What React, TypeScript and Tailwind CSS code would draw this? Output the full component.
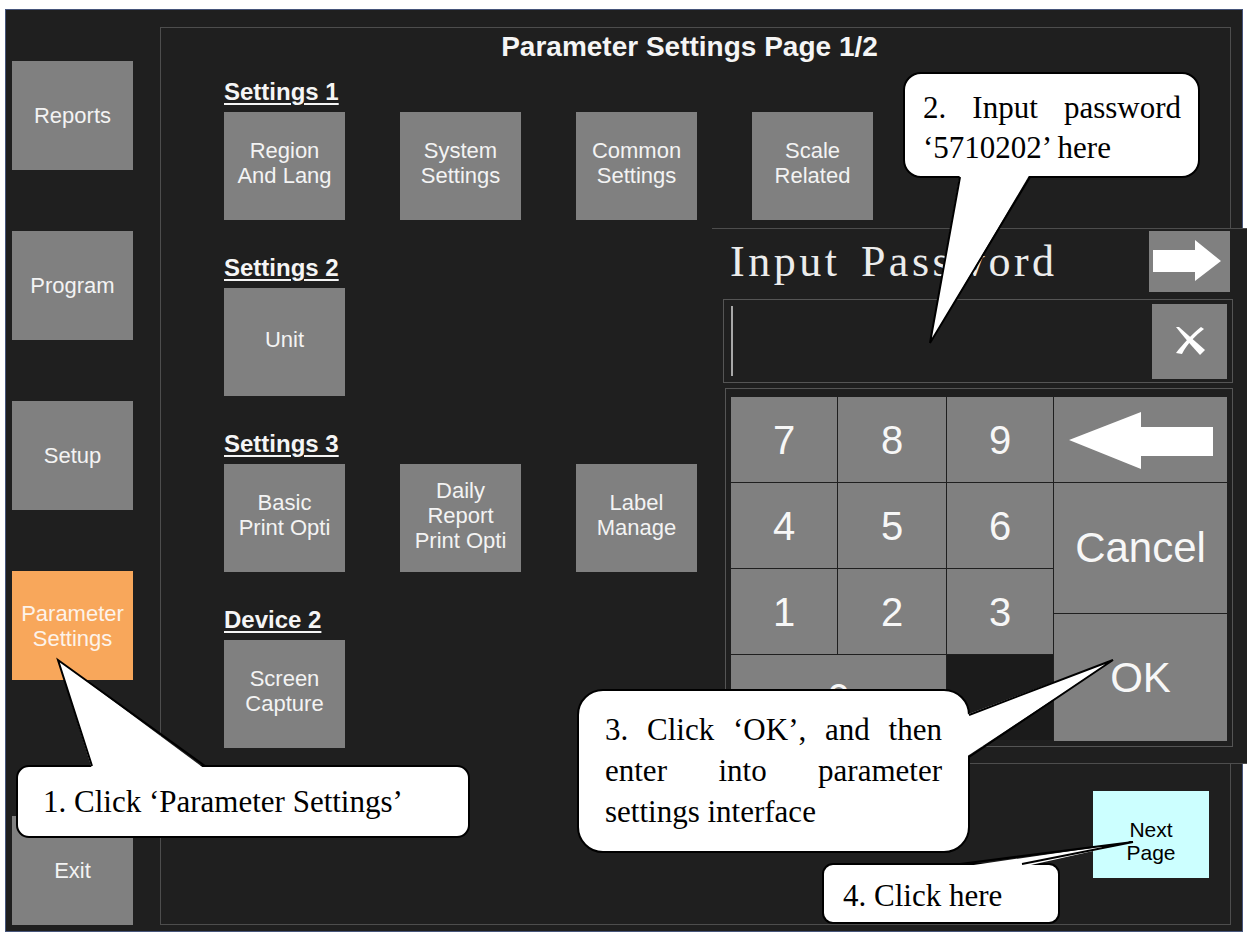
import React from "react";

const sections = [
  { title: "Settings 1", items: [["Region", "And Lang"], ["System", "Settings"], ["Common", "Settings"], ["Scale", "Related"]] },
  { title: "Settings 2", items: [["Unit"]] },
  { title: "Settings 3", items: [["Basic", "Print Opti"], ["Daily", "Report", "Print Opti"], ["Label", "Manage"]] },
  { title: "Device 2", items: [["Screen", "Capture"]] },
];

const SideButton = ({ label, active }: { label: string[]; active?: boolean }) => (
  <div
    className={`w-[121px] h-[109px] shrink-0 flex flex-col items-center justify-center text-center text-[22px] leading-[25px] ${
      active ? "bg-[#f8a75b] text-[#fdf3ea]" : "bg-[#808080] text-[#f3f3f3]"
    }`}
  >
    {label.map((l) => (
      <span key={l}>{l}</span>
    ))}
  </div>
);

const Tile = ({ label }: { label: string[] }) => (
  <div className="w-[121px] h-[108px] shrink-0 bg-[#808080] text-[#f3f3f3] flex flex-col items-center justify-center pb-[6px] text-center text-[22px] leading-[25px]">
    {label.map((l) => (
      <span key={l}>{l}</span>
    ))}
  </div>
);

const Key = ({ children, className = "" }: { children?: React.ReactNode; className?: string }) => (
  <div className={`bg-[#808080] text-[#f7f7f7] flex items-center justify-center text-[40px] leading-none ${className}`}>
    {children}
  </div>
);

function PasswordPanel() {
  return (
    <div className="absolute left-[712px] top-[228px] w-[535px] h-[536px] bg-[#1f1f1f] border-t border-b border-[#4d4d4d] pl-[11px] pr-[14px] pt-[2px]">
      <div className="flex items-center justify-between h-[61px] pr-[3px]">
        <span className="ml-[7px] font-['Liberation_Serif',serif] text-[44px] leading-none tracking-[3.5px] text-[#ececec] [word-spacing:6px]">
          Input Password
        </span>
        <div className="w-[81px] h-[61px] bg-[#808080] relative">
          <svg width="81" height="61" viewBox="0 0 81 61" className="absolute inset-0">
            <polygon points="4,19 46,19 46,9 72,30 46,50 46,41 4,41" fill="#ffffff" />
          </svg>
        </div>
      </div>
      <div className="mt-[7px] h-[84px] border border-[#555555] flex items-center justify-between pl-[7px] pr-[5px]">
        <div className="w-[2px] h-[70px] bg-[#a8a8a8]" />
        <div className="w-[75px] h-[75px] bg-[#808080] flex items-center justify-center">
          <svg width="38" height="34" viewBox="0 0 38 34">
            <path d="M5 3 L8 3 C 16 10, 25 18, 34 26 L 29 31 C 20 21, 12 12, 5 3 Z" fill="#ffffff" />
            <path d="M30 3 L 33 5 C 25 11, 16 20, 11 30 L 5 29 C 12 20, 21 10, 30 3 Z" fill="#ffffff" />
          </svg>
        </div>
      </div>
      <div className="mt-[5px] ml-[2px] h-[359px] border border-[#555555] p-[5px] pt-[8px] flex gap-px">
        <div className="grid grid-cols-[106px_108px_106px] grid-rows-[85px_85px_85px_85px] gap-px">
          {["7", "8", "9", "4", "5", "6", "1", "2", "3"].map((d) => (
            <Key key={d}>{d}</Key>
          ))}
          <Key className="col-span-2">0</Key>
          <div className="bg-[#1b1b1b]" />
        </div>
        <div className="w-[173px] flex flex-col gap-px">
          <div className="h-[85px] bg-[#808080] relative">
            <svg width="173" height="85" viewBox="0 0 173 85" className="absolute inset-0">
              <polygon points="15,43 87,15 87,30 159,30 159,59 87,59 87,72" fill="#ffffff" />
            </svg>
          </div>
          <Key className="h-[130px] text-[42px]">Cancel</Key>
          <Key className="flex-1 text-[42px]">OK</Key>
        </div>
      </div>
    </div>
  );
}

function Callouts() {
  const serif = "font-['Liberation_Serif',serif] text-[31px] text-black";
  return (
    <>
      <div className={`absolute left-[16px] top-[765px] w-[454px] h-[73px] bg-white border-2 border-black rounded-[13px] flex items-center pl-[25px] leading-[41px] ${serif}`}>
        1. Click ‘Parameter Settings’
      </div>
      <div className={`absolute left-[903px] top-[72px] w-[297px] h-[106px] bg-white border-2 border-black rounded-[18px] pl-[18px] pr-[17px] pt-[14px] leading-[40px] ${serif}`}>
        <div className="flex justify-between">
          <span>2.</span>
          <span>Input</span>
          <span>password</span>
        </div>
        <div>‘5710202’ here</div>
      </div>
      <div className={`absolute left-[577px] top-[689px] w-[393px] h-[164px] bg-white border-2 border-black rounded-[26px] pl-[26px] pr-[26px] pt-[18px] leading-[41px] ${serif}`}>
        <div className="flex justify-between">
          <span>3.</span>
          <span>Click</span>
          <span>‘OK’,</span>
          <span>and</span>
          <span>then</span>
        </div>
        <div className="flex justify-between">
          <span>enter</span>
          <span>into</span>
          <span>parameter</span>
        </div>
        <div>settings interface</div>
      </div>
      <div className={`absolute left-[822px] top-[863px] w-[238px] h-[61px] bg-white border-2 border-black rounded-[11px] flex items-center pl-[19px] pt-[3px] leading-[41px] ${serif}`}>
        4. Click here
      </div>
      <svg width="1247" height="932" className="absolute inset-0 pointer-events-none">
        <polygon points="92,769 58,660 205,769" fill="#ffffff" />
        <polyline points="92,766 58,660 205,766" fill="none" stroke="#000" strokeWidth="2" />
        <polygon points="960,174 930,343 1030,174" fill="#ffffff" />
        <polyline points="960,177 930,343 1030,177" fill="none" stroke="#000" strokeWidth="2" />
        <polygon points="966,715 1113,660 966,757" fill="#ffffff" />
        <polyline points="969,715 1113,660 969,757" fill="none" stroke="#000" strokeWidth="2" />
        <polygon points="960,867 1133,842 1022,867" fill="#ffffff" />
        <polyline points="960,864 1133,842 1022,864" fill="none" stroke="#000" strokeWidth="2" />
      </svg>
    </>
  );
}

export default function App() {
  return (
    <div className="relative w-[1247px] h-[932px] overflow-hidden bg-white font-['Liberation_Sans',Arial,sans-serif]">
      <div className="ml-[5px] mt-[9px] w-[1238px] h-[923px] border border-[#46557a] bg-[#1f1f1f] flex">
        <div className="pl-[6px] pt-[51px] pb-[6px] flex flex-col gap-[61px]">
          <SideButton label={["Reports"]} />
          <SideButton label={["Program"]} />
          <SideButton label={["Setup"]} />
          <SideButton label={["Parameter", "Settings"]} active />
          <div className="mt-auto">
            <SideButton label={["Exit"]} />
          </div>
        </div>
        <div className="ml-[27px] mt-[17px] w-[1071px] h-[898px] border border-[#4d4d4d] flex flex-col">
          <h1 className="pt-[3px] pr-[12px] text-center text-[28px] leading-[32px] font-bold text-[#f5f5f5]">
            Parameter Settings Page 1/2
          </h1>
          <div className="mt-[15px] pl-[63px] flex flex-col gap-[34px]">
            {sections.map((s) => (
              <div key={s.title} className="flex flex-col gap-[6px]">
                <span className="self-start text-[24px] leading-[28px] font-bold text-[#f5f5f5] underline decoration-2 underline-offset-[3px]">
                  {s.title}
                </span>
                <div className="flex gap-[55px]">
                  {s.items.map((it) => (
                    <Tile key={it.join()} label={it} />
                  ))}
                </div>
              </div>
            ))}
          </div>
          <div className="mt-auto self-end mr-[21px] mb-[46px] w-[116px] h-[87px] bg-[#ccffff] text-black flex flex-col items-center justify-center pt-[12px] text-[21px] leading-[23px]">
            <span>Next</span>
            <span>Page</span>
          </div>
        </div>
      </div>
      <PasswordPanel />
      <Callouts />
    </div>
  );
}
